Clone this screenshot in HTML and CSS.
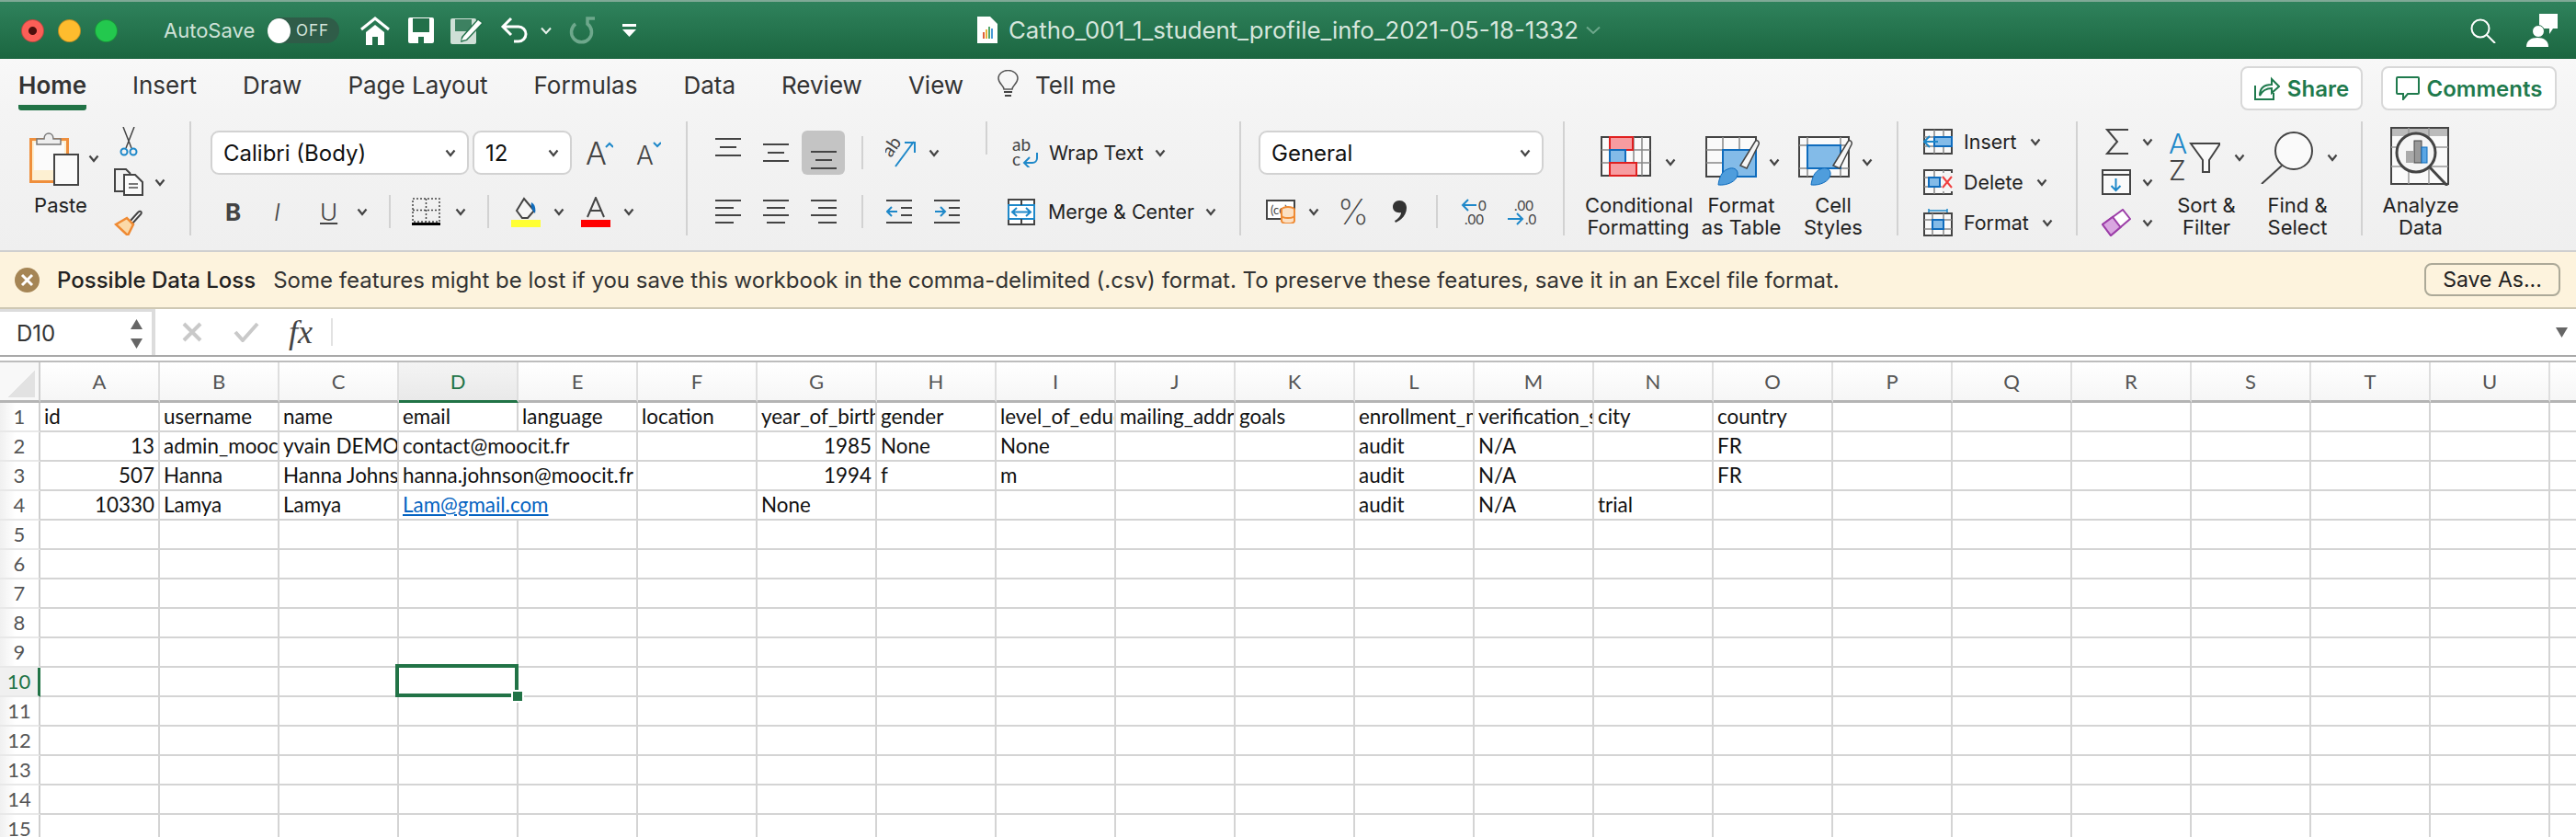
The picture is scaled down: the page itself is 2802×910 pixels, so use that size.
FILE: index.html
```html
<!DOCTYPE html>
<html lang="en">
<head>
  <meta charset="UTF-8">
  <title>Catho_001_1_student_profile_info_2021-05-18-1332</title>
  <link rel="stylesheet" href="styles.css">
</head>
<body>

<svg class="defs">
  <symbol id="chev" viewBox="0 0 12 9"><path d="M1.5 1.5 6 7l4.5-5.5" fill="none" stroke="#444" stroke-width="2.2"/></symbol>
  <symbol id="linesLeft" viewBox="0 0 28 26"><path d="M0 1h28M0 9h20M0 17h28M0 25h20" stroke="#444" stroke-width="2"/></symbol>
  <symbol id="linesCenter" viewBox="0 0 28 26"><path d="M0 1h28M4 9h20M0 17h28M4 25h20" stroke="#444" stroke-width="2"/></symbol>
  <symbol id="linesRight" viewBox="0 0 28 26"><path d="M0 1h28M8 9h20M0 17h28M8 25h20" stroke="#444" stroke-width="2"/></symbol>
</svg>

<header class="titlebar">
  <div class="lights">
    <span class="light red"></span>
    <span class="light amber"></span>
    <span class="light green"></span>
  </div>
  <span class="autosave">AutoSave</span>
  <div class="toggle"><span class="knob"></span><span class="toggle-text">OFF</span></div>
  <div class="qat">
    <svg width="32" height="31" viewBox="0 0 32 31"><path d="M1 14 16 2l15 12" fill="none" stroke="#fff" stroke-width="3"/><path d="M6 17 16 9l10 8v14h-7v-9h-6v9H6z" fill="#fff"/></svg>
    <svg class="ml-20" width="28" height="28" viewBox="0 0 28 28"><rect width="28" height="28" rx="2" fill="#fff"/><rect x="5" y="1" width="18" height="15" fill="#22704a"/><rect x="11" y="21" width="6" height="7" fill="#22704a"/></svg>
    <svg class="ml-18" width="36" height="30" viewBox="0 0 36 30"><rect y="2" width="28" height="28" rx="2" fill="#cfe0d7"/><rect x="5" y="3" width="18" height="13" fill="#3d8161"/><path d="M12 22 30 2l6 5-18 19-7 2z" fill="#22704a"/><path d="M14 22 30 4l4 3-17 18-5 1z" fill="#fff"/></svg>
    <svg class="ml-18" width="30" height="30" viewBox="0 0 30 30"><path d="M12 2 3 11l9 9M3 11h17a7.500 7.500 0 0 1 0 16h-5" fill="none" stroke="#fff" stroke-width="3"/></svg>
    <svg class="ml-14" width="12" height="9" viewBox="0 0 12 9"><path d="M1 1.500 6 7l5-5.500" fill="none" stroke="#e8f1ec" stroke-width="2"/></svg>
    <svg class="ml-17" width="31" height="30" viewBox="0 0 31 30"><path d="M9 8a11 11 0 1 0 13 0V2h8" fill="none" stroke="#6ea88c" stroke-width="3.500"/></svg>
    <svg class="ml-29" width="15" height="14" viewBox="0 0 15 14"><rect width="15" height="3" fill="#fff"/><path d="M0 6h15l-7.500 8z" fill="#fff"/></svg>
  </div>
  <div class="doc-title">
    <svg width="22" height="29" viewBox="0 0 22 29"><path d="M0 0h14l8 8v21H0z" fill="#fff"/><rect x="6" y="17" width="2" height="7" fill="#e0603a"/><rect x="9" y="14" width="2" height="10" fill="#e7b23a"/><rect x="12" y="11" width="2" height="13" fill="#54a86b"/><rect x="15" y="13" width="2" height="11" fill="#4b9bd6"/></svg>
    <span class="doc-name">Catho_001_1_student_profile_info_2021-05-18-1332</span>
    <svg class="doc-chev" width="16" height="10" viewBox="0 0 16 10"><path d="M1 1.500 8 8l7-6.500" fill="none" stroke="#6ea88c" stroke-width="2"/></svg>
  </div>
  <div class="title-right">
    <svg width="28" height="27" viewBox="0 0 28 27"><circle cx="11" cy="11" r="9.500" fill="none" stroke="#fff" stroke-width="2"/><path d="m18 18 9 9" stroke="#fff" stroke-width="2"/></svg>
    <svg class="ml-33" width="34" height="36" viewBox="0 0 34 36"><path d="M14 0h20v16h-5l-4 6v-6H14z" fill="#fff"/><circle cx="13" cy="19" r="6.500" fill="#fff" stroke="#1f6e48" stroke-width="1"/><path d="M0 36c0-7 5-10 12-10s12 3 12 10z" fill="#fff"/></svg>
  </div>
</header>

<nav class="tabs">
  <span class="tab active">Home</span>
  <span class="tab">Insert</span>
  <span class="tab">Draw</span>
  <span class="tab">Page Layout</span>
  <span class="tab">Formulas</span>
  <span class="tab">Data</span>
  <span class="tab">Review</span>
  <span class="tab">View</span>
  <svg class="bulb" width="23" height="30" viewBox="0 0 23 30"><path d="M7 21c0-4-6-6-6-12a10.500 8.500 0 0 1 21 0c0 6-6 8-6 12z" fill="none" stroke="#555" stroke-width="1.500"/><path d="M7 24h9M8 28h7" stroke="#444" stroke-width="2"/></svg>
  <span class="tab tell">Tell me</span>
  <div class="tab-actions">
    <button class="action share">
      <svg width="28" height="26" viewBox="0 0 28 26"><path d="M1 10v15h20v-7M6 21c0-8 5-12 13-12V3l8 8-8 7v-5c-6 0-10 2-13 8z" fill="none" stroke="#1f7a4d" stroke-width="2"/></svg>
      Share
    </button>
    <button class="action comments">
      <svg width="26" height="26" viewBox="0 0 26 26"><path d="M2 1h22a1 1 0 0 1 1 1v16a1 1 0 0 1-1 1H13l-5 6v-6H2a1 1 0 0 1-1-1V2a1 1 0 0 1 1-1z" fill="none" stroke="#1f7a4d" stroke-width="2"/></svg>
      Comments
    </button>
  </div>
</nav>

<section class="ribbon">

  <div class="group clip">
    <div class="paste">
      <div class="paste-top">
        <svg width="54" height="60" viewBox="0 0 54 60"><rect x="1.500" y="9.500" width="40" height="46" fill="#fdf0d2" stroke="#ef8f3c" stroke-width="3"/><rect x="5" y="13" width="33" height="30" fill="#fbfbfb"/><path d="M8 15V9h8c0-8 10-8 10 0h8v6z" fill="#eee" stroke="#777" stroke-width="1.500"/><rect x="27" y="26" width="26" height="33" fill="#fafafa" stroke="#444" stroke-width="2"/></svg>
        <svg class="chev"><use href="#chev"/></svg>
      </div>
      <div class="big-label">Paste</div>
    </div>
    <div class="clip-tools">
      <div class="tool-row">
        <svg class="ml-6" width="20" height="32" viewBox="0 0 20 32"><path d="M4 0 13 23M16 0 7 23" stroke="#444" stroke-width="1.500"/><circle cx="5" cy="27" r="3.500" fill="none" stroke="#1e88c9" stroke-width="2"/><circle cx="15" cy="27" r="3.500" fill="none" stroke="#1e88c9" stroke-width="2"/></svg>
      </div>
      <div class="tool-row">
        <svg width="32" height="30" viewBox="0 0 32 30"><path d="M10 25H1V1h12l5 5" fill="none" stroke="#444" stroke-width="2"/><path d="M11 7h12l8 8v14H11z" fill="#fafafa" stroke="#444" stroke-width="2"/><path d="M16 17h10M16 21h10" stroke="#777" stroke-width="2"/></svg>
        <svg class="chev ml-12"><use href="#chev"/></svg>
      </div>
      <div class="tool-row">
        <svg width="31" height="28" viewBox="0 0 31 28"><path d="m17 13 9-10c3-3 5 0 3 2l-9 10z" fill="#fff" stroke="#444" stroke-width="2"/><path d="M2 16 14 9l7 7-6 12z" fill="#fbd9a8" stroke="#ef8a33" stroke-width="2.500"/></svg>
      </div>
    </div>
  </div>

  <div class="group font">
    <div class="row row-top">
      <div class="combo font-name">Calibri (Body)<svg class="chev"><use href="#chev"/></svg></div>
      <div class="combo font-size">12<svg class="chev"><use href="#chev"/></svg></div>
      <svg class="ml-15" width="30" height="30" viewBox="0 0 30 30"><text class="glyph" x="0" y="28" font-size="34">A</text><path d="m22 9 4-4 4 4" fill="none" stroke="#1e88c9" stroke-width="2"/></svg>
      <svg class="ml-25" width="27" height="30" viewBox="0 0 27 30"><text class="glyph" x="0" y="28" font-size="28">A</text><path d="m19 4 4 4 4-4" fill="none" stroke="#1e88c9" stroke-width="2"/></svg>
    </div>
    <div class="row row-bottom font-bottom">
      <span class="fmt bold">B</span>
      <span class="fmt italic">I</span>
      <span class="fmt under">U</span>
      <svg class="chev ml-22"><use href="#chev"/></svg>
      <span class="sep ml-23"></span>
      <svg class="ml-23" width="31" height="30" viewBox="0 0 31 30"><path d="M1 1h29v25H1zM15.500 1v25M1 13.500h29" fill="none" stroke="#444" stroke-width="1.500" stroke-dasharray="2 2"/><rect y="27" width="31" height="3" fill="#000"/></svg>
      <svg class="chev ml-16"><use href="#chev"/></svg>
      <span class="sep ml-23"></span>
      <svg class="ml-24" width="32" height="33" viewBox="0 0 32 33"><path d="m6 15 8-13 11 13-7 8h-6z" fill="#f5f5f5" stroke="#444" stroke-width="2"/><path d="M22 6c4 2 5 7 4 12-3-3-5-7-4-12z" fill="#0f6cbd"/><rect y="25" width="32" height="8" fill="#ffff33"/></svg>
      <svg class="chev ml-14"><use href="#chev"/></svg>
      <svg class="ml-18" width="32" height="33" viewBox="0 0 32 33"><path d="m7 22 9-21 9 21M10 15h12" fill="none" stroke="#444" stroke-width="2"/><rect y="25" width="32" height="8" fill="#f00"/></svg>
      <svg class="chev ml-14"><use href="#chev"/></svg>
    </div>
  </div>

  <div class="group align">
    <div class="row row-top">
      <svg width="28" height="48" viewBox="0 0 28 48"><path d="M0 9h28M5 18h18M0 27h28" stroke="#444" stroke-width="2"/></svg>
      <svg class="ml-24" width="28" height="48" viewBox="0 0 28 48"><path d="M0 15h28M5 24h18M0 33h28" stroke="#444" stroke-width="2"/></svg>
      <span class="pressed ml-14"><svg width="28" height="48" viewBox="0 0 28 48"><path d="M0 23h28M5 32h18M0 41h28" stroke="#444" stroke-width="2"/></svg></span>
      <span class="sep ml-18"></span>
      <svg class="ml-24" width="33" height="31" viewBox="0 0 33 31"><text class="glyph small-glyph" transform="translate(6 21) rotate(-55)" font-size="20">ab</text><path d="m11 30 20-27M21 4h11v11" fill="none" stroke="#1e88c9" stroke-width="2"/></svg>
      <svg class="chev ml-14"><use href="#chev"/></svg>
      <span class="sep sep-short ml-50"></span>
      <svg class="ml-27" width="29" height="31" viewBox="0 0 29 31"><text class="glyph small-glyph" x="0" y="13" font-size="19">ab</text><text class="glyph small-glyph" x="0" y="29" font-size="19">c</text><path d="M27 15v6a5 5 0 0 1-5 5H13m6-6-6 6 6 6" fill="none" stroke="#1e88c9" stroke-width="2"/></svg>
      <span class="big-label inline ml-11">Wrap Text</span>
      <svg class="chev ml-12"><use href="#chev"/></svg>
    </div>
    <div class="row row-bottom">
      <svg width="28" height="26"><use href="#linesLeft"/></svg>
      <svg class="ml-24" width="28" height="26"><use href="#linesCenter"/></svg>
      <svg class="ml-24" width="28" height="26"><use href="#linesRight"/></svg>
      <span class="sep ml-27"></span>
      <svg class="ml-25" width="28" height="26" viewBox="0 0 28 26"><path d="M0 1h28M16 9h12M16 17h12M0 25h28" stroke="#444" stroke-width="2"/><path d="M12 13H1m5-5-5 5 5 5" fill="none" stroke="#1e88c9" stroke-width="2"/></svg>
      <svg class="ml-24" width="28" height="26" viewBox="0 0 28 26"><path d="M0 1h28M16 9h12M16 17h12M0 25h28" stroke="#444" stroke-width="2"/><path d="M1 13h11M7 8l5 5-5 5" fill="none" stroke="#1e88c9" stroke-width="2"/></svg>
      <svg class="ml-52" width="30" height="29" viewBox="0 0 30 29"><rect x="1" y="1" width="28" height="27" fill="#fff" stroke="#444" stroke-width="2"/><rect x="1" y="7" width="28" height="15" fill="#fff" stroke="#1e88c9" stroke-width="2"/><path d="M15 1v6M15 22v6" stroke="#444" stroke-width="2"/><path d="M6 14.500h18M10 10l-5 4.500 5 4.500M20 10l5 4.500-5 4.500" fill="none" stroke="#1e88c9" stroke-width="2"/></svg>
      <span class="big-label inline ml-14">Merge &amp; Center</span>
      <svg class="chev ml-12"><use href="#chev"/></svg>
    </div>
  </div>

  <div class="group number">
    <div class="row row-top">
      <div class="combo number-format">General<svg class="chev"><use href="#chev"/></svg></div>
    </div>
    <div class="row row-bottom number-bottom">
      <svg width="32" height="26" viewBox="0 0 32 26"><rect x="1" y="1" width="30" height="20" fill="#fff" stroke="#444" stroke-width="2"/><text class="glyph small-glyph" x="5" y="16" font-size="13">(cc)</text><ellipse cx="24" cy="11" rx="7" ry="3" fill="#fbe0c4" stroke="#ef8a33" stroke-width="2"/><path d="M17 11v12c0 4 14 4 14 0V11M17 17c0 4 14 4 14 0" fill="#fbe0c4" stroke="#ef8a33" stroke-width="2"/></svg>
      <svg class="chev ml-14"><use href="#chev"/></svg>
      <span class="percent ml-20">%</span>
      <svg class="ml-29" width="16" height="24" viewBox="0 0 16 24"><path d="M8 0c5 0 8 3 8 8 0 7-5 13-12 16l-1-2c4-2 7-6 7-9-5 1-9-2-9-6 0-4 3-7 7-7z" fill="#333"/></svg>
      <span class="sep ml-32"></span>
      <svg class="ml-24" width="31" height="30" viewBox="0 0 31 30"><text class="glyph small-glyph" x="20" y="14" font-size="15">0</text><text class="glyph small-glyph" x="5" y="29" font-size="15">.00</text><path d="M18 8H3m6-6-6 6 6 6" fill="none" stroke="#1e88c9" stroke-width="2"/></svg>
      <svg class="ml-20" width="32" height="30" viewBox="0 0 32 30"><text class="glyph small-glyph" x="8" y="14" font-size="15">.00</text><text class="glyph small-glyph" x="20" y="29" font-size="15">.0</text><path d="M1 23h16m-6-6 6 6-6 6" fill="none" stroke="#1e88c9" stroke-width="2"/></svg>
    </div>
  </div>

  <div class="group styles">
    <div class="big-tool cond">
      <div class="big-top">
        <svg width="55" height="44" viewBox="0 0 55 44"><rect x="1" y="1" width="53" height="42" fill="#fafafa" stroke="#444" stroke-width="2"/><path d="M36 1v42M45 1v42M1 15h53M1 29h53M10 1v42" stroke="#888" stroke-width="1.500"/><rect x="10" y="1" width="25" height="14" fill="#f79ca0" stroke="#e02020" stroke-width="2"/><rect x="10" y="15" width="17" height="14" fill="#83bbe8" stroke="#0f6cbd" stroke-width="2"/><rect x="10" y="29" width="29" height="14" fill="#f79ca0" stroke="#e02020" stroke-width="2"/></svg>
        <svg class="chev ml-15"><use href="#chev"/></svg>
      </div>
      <div class="big-label">Conditional<br>Formatting</div>
    </div>
    <div class="big-tool table-fmt">
      <div class="big-top">
        <svg width="59" height="54" viewBox="0 0 59 54"><rect x="1" y="1" width="54" height="43" fill="#fafafa" stroke="#444" stroke-width="2"/><path d="M19 1v43M37 1v43M1 15h54M1 29h54" stroke="#888" stroke-width="1.500"/><rect x="19" y="15" width="36" height="29" fill="#83bbe8" stroke="#0f6cbd" stroke-width="2"/><path d="m38 32 16-26c2-3 5 0 4 3L45 35z" fill="#f5f5f5" stroke="#444" stroke-width="1.500"/><path d="M14 53c1-8 4-15 10-17 6-3 12 0 11 6-1 7-11 12-21 11z" fill="#4f9ddc" stroke="#0f6cbd" stroke-width="1"/></svg>
        <svg class="chev ml-10"><use href="#chev"/></svg>
      </div>
      <div class="big-label">Format<br>as Table</div>
    </div>
    <div class="big-tool cell-style">
      <div class="big-top">
        <svg width="59" height="54" viewBox="0 0 59 54"><rect x="1" y="1" width="54" height="43" fill="#fafafa" stroke="#444" stroke-width="2"/><path d="M10 1v43M1 10h54M1 35h54M46 1v43" stroke="#888" stroke-width="1.500"/><rect x="10" y="10" width="36" height="25" fill="#83bbe8" stroke="#0f6cbd" stroke-width="2"/><path d="m38 32 16-26c2-3 5 0 4 3L45 35z" fill="#f5f5f5" stroke="#444" stroke-width="1.500"/><path d="M14 53c1-8 4-15 10-17 6-3 12 0 11 6-1 7-11 12-21 11z" fill="#4f9ddc" stroke="#0f6cbd" stroke-width="1"/></svg>
        <svg class="chev ml-10"><use href="#chev"/></svg>
      </div>
      <div class="big-label">Cell<br>Styles</div>
    </div>
  </div>

  <div class="group cells">
    <div class="tool-row">
      <svg width="32" height="28" viewBox="0 0 32 28"><rect x="1" y="1" width="30" height="26" fill="#fafafa" stroke="#444" stroke-width="2"/><path d="M12 1v26M1 9h30M1 19h30M22 1v26" stroke="#888" stroke-width="1.500"/><rect x="12" y="9" width="19" height="10" fill="#83bbe8" stroke="#0f6cbd" stroke-width="2"/><path d="M16 14H1m6-6-6 6 6 6" fill="none" stroke="#1e88c9" stroke-width="2"/></svg>
      <span class="big-label inline ml-12">Insert</span>
      <svg class="chev ml-14"><use href="#chev"/></svg>
    </div>
    <div class="tool-row">
      <svg width="32" height="28" viewBox="0 0 32 28"><rect x="1" y="1" width="30" height="26" fill="#fafafa" stroke="#444" stroke-width="2"/><path d="M12 1v26M1 9h30M1 19h30M22 1v26" stroke="#888" stroke-width="1.500"/><rect x="6" y="9" width="12" height="10" fill="#83bbe8" stroke="#0f6cbd" stroke-width="2"/><rect x="20" y="4" width="12" height="20" fill="#f4f4f4"/><path d="m21 8 10 12M31 8 21 20" stroke="#f04040" stroke-width="2"/></svg>
      <span class="big-label inline ml-12">Delete</span>
      <svg class="chev ml-14"><use href="#chev"/></svg>
    </div>
    <div class="tool-row">
      <svg width="32" height="30" viewBox="0 0 32 30"><rect x="1" y="5" width="30" height="24" fill="#fafafa" stroke="#444" stroke-width="2"/><path d="M10 5v24M22 5v24M1 12h30M1 22h30" stroke="#888" stroke-width="1.500"/><rect x="10" y="12" width="12" height="10" fill="#83bbe8" stroke="#0f6cbd" stroke-width="2"/><path d="M6 2h20M6 0v4M26 0v4" stroke="#1e88c9" stroke-width="1.500"/></svg>
      <span class="big-label inline ml-12">Format</span>
      <svg class="chev ml-14"><use href="#chev"/></svg>
    </div>
  </div>

  <div class="group editing">
    <div class="edit-tools">
      <div class="tool-row">
        <span class="edit-icon"><svg width="25" height="28" viewBox="0 0 25 28"><path d="M25 1H2l11 13L2 27h23" fill="none" stroke="#444" stroke-width="2"/></svg></span>
        <svg class="chev ml-12"><use href="#chev"/></svg>
      </div>
      <div class="tool-row">
        <span class="edit-icon"><svg width="32" height="28" viewBox="0 0 32 28"><rect x="1" y="1" width="30" height="26" fill="#fafafa" stroke="#444" stroke-width="2"/><path d="M1 6h30" stroke="#444" stroke-width="2"/><path d="M15.500 10v13m-5-5 5 5 5-5" fill="none" stroke="#1e88c9" stroke-width="2"/></svg></span>
        <svg class="chev ml-12"><use href="#chev"/></svg>
      </div>
      <div class="tool-row">
        <span class="edit-icon"><svg width="32" height="30" viewBox="0 0 32 30"><path d="M1 17 23 1l8 10-21 18z" fill="#fff" stroke="#9c3ea8" stroke-width="2"/><path d="M1 17 12 9l8.500 11L10 29z" fill="#d9a6e0" stroke="#9c3ea8" stroke-width="2"/></svg></span>
        <svg class="chev ml-12"><use href="#chev"/></svg>
      </div>
    </div>
    <div class="big-tool sort">
      <div class="big-top">
        <svg width="56" height="54" viewBox="0 0 56 54"><text class="glyph" x="0" y="24" font-size="30" fill="#1e88c9">A</text><text class="glyph" x="0" y="53" font-size="30">Z</text><path d="M24 13h32L44 31v13h-7V31z" fill="#fafafa" stroke="#444" stroke-width="2"/></svg>
        <svg class="chev ml-15"><use href="#chev"/></svg>
      </div>
      <div class="big-label">Sort &amp;<br>Filter</div>
    </div>
    <div class="big-tool find">
      <div class="big-top">
        <svg width="57" height="57" viewBox="0 0 57 57"><ellipse cx="36" cy="21" rx="20" ry="20" fill="#fafafa" stroke="#444" stroke-width="2"/><path d="M23 37 1 57" stroke="#444" stroke-width="2"/></svg>
        <svg class="chev ml-15"><use href="#chev"/></svg>
      </div>
      <div class="big-label">Find &amp;<br>Select</div>
    </div>
  </div>

  <div class="group analyze">
    <div class="big-tool analyze-tool">
      <div class="big-top">
        <svg width="64" height="64" viewBox="0 0 64 64"><rect x="1" y="1" width="62" height="61" fill="#fafafa" stroke="#444" stroke-width="2"/><rect x="2" y="2" width="60" height="8" fill="#bbb"/><path d="M1 22h62M1 43h62M20 1v61M42 1v61" stroke="#999" stroke-width="1.500"/><circle cx="28" cy="28" r="21" fill="#f5f5f5" stroke="#444" stroke-width="3"/><path d="m43 44 19 20" stroke="#444" stroke-width="3"/><rect x="17" y="26" width="8" height="13" fill="#aaa"/><rect x="26" y="15" width="8" height="24" fill="#999" stroke="#444"/><rect x="34" y="22" width="6" height="17" fill="#5aa6e4" stroke="#0f6cbd"/></svg>
      </div>
      <div class="big-label">Analyze<br>Data</div>
    </div>
  </div>
</section>

<section class="banner">
  <svg width="27" height="27" viewBox="0 0 27 27"><circle cx="13.500" cy="13.500" r="13.500" fill="#a58555"/><path d="m8 8 11 11M19 8 8 19" stroke="#fff" stroke-width="3"/></svg>
  <strong class="banner-title">Possible Data Loss</strong>
  <span class="banner-text">Some features might be lost if you save this workbook in the comma-delimited (.csv) format. To preserve these features, save it in an Excel file format.</span>
  <button class="save-as">Save As...</button>
</section>

<section class="formula-bar">
  <div class="name-box">
    <span>D10</span>
    <div class="spin">
      <svg width="13" height="11" viewBox="0 0 13 11"><path d="M6.500 0 13 11H0z" fill="#666"/></svg>
      <svg width="13" height="11" viewBox="0 0 13 11"><path d="M6.500 11 13 0H0z" fill="#666"/></svg>
    </div>
  </div>
  <svg class="ml-29" width="22" height="22" viewBox="0 0 22 22"><path d="m2 2 18 18M20 2 2 20" stroke="#c9c9c9" stroke-width="4"/></svg>
  <svg class="ml-34" width="28" height="22" viewBox="0 0 28 22"><path d="m2 11 8 9L26 2" fill="none" stroke="#c9c9c9" stroke-width="4"/></svg>
  <span class="fx">fx</span>
  <span class="fx-sep"></span>
  <svg class="formula-drop" width="13" height="11" viewBox="0 0 13 11"><path d="M6.500 11 13 0H0z" fill="#666"/></svg>
</section>

<main class="sheet" id="sheet"></main>

<script src="app.js"></script>
</body>
</html>
```

FILE: styles.css
```css
html, body {
  margin: 0;
  height: 910px;
  overflow: hidden;
}
body {
  width: 2802px;
  font-family: Inter, "Noto Sans", sans-serif;
  color: #222;
  background: #fff;
}
.defs {
  position: absolute;
  width: 0;
  height: 0;
}
svg {
  flex: none;
  display: block;
}
.glyph {
  font-family: Inter, sans-serif;
  font-weight: 300;
  fill: #444;
}
.glyph[fill="#1e88c9"] {
  fill: #1e88c9;
}
.small-glyph {
  font-family: Lato, sans-serif;
  font-weight: 400;
}
.chev {
  width: 12px;
  height: 9px;
}

.ml-6 { margin-left: 6px; }
.ml-10 { margin-left: 10px; }
.ml-11 { margin-left: 11px; }
.ml-12 { margin-left: 12px; }
.ml-14 { margin-left: 14px; }
.ml-15 { margin-left: 15px; }
.ml-16 { margin-left: 16px; }
.ml-17 { margin-left: 17px; }
.ml-18 { margin-left: 18px; }
.ml-20 { margin-left: 20px; }
.ml-22 { margin-left: 22px; }
.ml-23 { margin-left: 23px; }
.ml-24 { margin-left: 24px; }
.ml-25 { margin-left: 25px; }
.ml-27 { margin-left: 27px; }
.ml-29 { margin-left: 29px; }
.ml-32 { margin-left: 32px; }
.ml-33 { margin-left: 33px; }
.ml-34 { margin-left: 34px; }
.ml-50 { margin-left: 50px; }
.ml-52 { margin-left: 52px; }

/* title bar */
.titlebar {
  height: 64px;
  box-sizing: border-box;
  border-top: 2px solid #7fa996;
  display: flex;
  align-items: center;
  position: relative;
  background: linear-gradient(#2f825c, #1b6640);
}
.lights {
  display: flex;
  gap: 15px;
  padding-left: 23px;
}
.light {
  width: 25px;
  height: 25px;
  border-radius: 50%;
  box-sizing: border-box;
  border: 1px solid rgba(0, 0, 0, .25);
}
.red {
  background: radial-gradient(circle, #4d0f0c 0 4px, #fc5f57 5px);
}
.amber {
  background: #febc2e;
}
.green {
  background: #23c84e;
}
.autosave {
  margin-left: 50px;
  width: 113px;
  font-size: 22px;
  color: #cfe2d8;
}
.toggle {
  width: 78px;
  height: 28px;
  border-radius: 14px;
  background: #2f5c48;
  display: flex;
  align-items: center;
}
.knob {
  width: 25px;
  height: 27px;
  border-radius: 50%;
  background: #fff;
}
.toggle-text {
  margin-left: 6px;
  font-size: 17px;
  letter-spacing: 1px;
  color: #d5e5dc;
}
.qat {
  display: flex;
  align-items: center;
  margin-left: 23px;
}
.doc-title {
  position: absolute;
  left: 1063px;
  top: 15px;
  display: flex;
  align-items: center;
  gap: 12px;
}
.doc-name {
  font-size: 25.8px;
  color: #d6e6dd;
  white-space: nowrap;
}
.doc-chev {
  margin-left: -4px;
}
.title-right {
  margin-left: auto;
  padding-right: 20px;
  display: flex;
  align-items: center;
}

/* tabs */
.tabs {
  height: 56px;
  box-sizing: border-box;
  padding-left: 20px;
  display: flex;
  gap: 50px;
  background: linear-gradient(#f8f8f8, #f4f4f4);
}
.tab {
  height: 56px;
  box-sizing: border-box;
  padding-top: 13px;
  font-size: 26px;
  line-height: 32px;
  color: #333;
  white-space: nowrap;
}
.tab.active {
  font-weight: 600;
  border-bottom: 6px solid #217346;
  border-radius: 0 0 3px 3px;
}
.bulb {
  margin: 12px 0 0 -13px;
}
.tell {
  margin-left: -32px;
}
.tab-actions {
  margin-left: auto;
  padding: 8px 21px 0 0;
  display: flex;
  gap: 20px;
  height: 48px;
}
.action {
  height: 48px;
  box-sizing: border-box;
  background: #fff;
  border: 2px solid #d8d8d8;
  border-radius: 8px;
  display: flex;
  align-items: center;
  justify-content: center;
  gap: 8px;
  font: 600 24px Inter, sans-serif;
  color: #1f7a4d;
}
.share {
  width: 133px;
}
.comments {
  width: 191px;
}

/* ribbon */
.ribbon {
  height: 154px;
  box-sizing: border-box;
  padding-top: 12px;
  border-bottom: 2px solid #cfcfcf;
  display: flex;
  background: linear-gradient(#f4f4f4, #efefef);
}
.group {
  height: 124px;
  box-sizing: border-box;
  border-right: 2px solid #d2d2d2;
}
.clip {
  width: 208px;
  display: flex;
}
.font {
  width: 540px;
  padding: 10px 0 0 21px;
}
.align {
  width: 602px;
  padding: 10px 0 0 30px;
}
.number {
  width: 352px;
  padding: 10px 0 0 19px;
}
.styles {
  width: 363px;
  padding-left: 22px;
  display: flex;
  gap: 8px;
}
.cells {
  width: 195px;
  padding-left: 27px;
}
.editing {
  width: 310px;
  padding-left: 26px;
  display: flex;
}
.analyze {
  padding-left: 13px;
  border-right: none;
}
.row {
  height: 48px;
  display: flex;
  align-items: center;
}
.row-bottom {
  margin-top: 16px;
}
.font-bottom {
  padding-left: 16px;
}
.number-bottom {
  padding-left: 8px;
}
.sep {
  flex: none;
  width: 2px;
  height: 36px;
  background: #d2d2d2;
}
.sep-short {
  align-self: flex-start;
  margin-top: -10px;
}
.paste {
  margin-left: 16px;
  width: 100px;
  padding-top: 10px;
}
.paste-top {
  padding-left: 16px;
  display: flex;
  align-items: center;
  gap: 10px;
}
.big-label {
  font-size: 22px;
  line-height: 24px;
  text-align: center;
  color: #222;
  white-space: nowrap;
}
.big-label.inline {
  font-size: 21.4px;
}
.paste .big-label {
  margin-top: 9px;
}
.clip-tools {
  margin-left: 8px;
}
.tool-row {
  height: 44px;
  display: flex;
  align-items: center;
}
.combo {
  height: 48px;
  box-sizing: border-box;
  padding: 0 12px;
  background: #fff;
  border: 2px solid #d2d2d2;
  border-radius: 9px;
  display: flex;
  align-items: center;
  justify-content: space-between;
  font-size: 24px;
  color: #111;
}
.font-name {
  width: 281px;
}
.font-size {
  width: 108px;
  margin-left: 4px;
}
.number-format {
  width: 310px;
}
.fmt {
  font-size: 26px;
  color: #444;
  width: 18px;
}
.bold {
  font-weight: 700;
}
.italic {
  margin-left: 35px;
  font-weight: 300;
  font-style: italic;
}
.under {
  margin-left: 32px;
  font-weight: 300;
  text-decoration: underline;
}
.pressed {
  width: 47px;
  height: 48px;
  background: #c4c4c4;
  border-radius: 6px;
  display: flex;
  justify-content: center;
}
.percent {
  width: 30px;
  font-size: 38px;
  font-weight: 200;
  color: #444;
}
.big-tool {
  padding-top: 10px;
}
.big-top {
  height: 69px;
  display: flex;
  align-items: flex-start;
}
.big-top .chev {
  margin-top: 24px;
}
.cond {
  width: 116px;
}
.cond .big-top {
  padding: 6px 0 0 17px;
  height: 63px;
}
.table-fmt {
  width: 92px;
}
.table-fmt .big-top {
  padding: 6px 0 0 7px;
  height: 63px;
}
.cell-style {
  width: 92px;
}
.cell-style .big-top {
  padding: 6px 0 0 8px;
  height: 63px;
}
.edit-icon {
  width: 32px;
  display: flex;
  justify-content: center;
}
.edit-tools {
  width: 56px;
}
.sort {
  margin-left: 13px;
  width: 90px;
}
.sort .big-top {
  padding: 1px 0 0 4px;
  height: 68px;
}
.find {
  margin-left: 8px;
  width: 92px;
}
.find .big-top {
  padding: 1px 0 0 6px;
  height: 68px;
}
.analyze-tool {
  width: 100px;
  padding-top: 6px;
}
.analyze-tool .big-top {
  padding-left: 17px;
  height: 73px;
}

/* banner */
.banner {
  height: 62px;
  box-sizing: border-box;
  padding: 0 17px 0 16px;
  border-bottom: 2px solid #cfc8b4;
  display: flex;
  align-items: center;
  background: #fdf3dd;
  font-size: 24px;
  color: #333;
}
.banner-title {
  margin-left: 19px;
  font-weight: 500;
  color: #222;
}
.banner-text {
  margin-left: 19px;
  white-space: nowrap;
}
.save-as {
  margin-left: auto;
  width: 148px;
  height: 36px;
  background: #fdf3dd;
  border: 2px solid #aca998;
  border-radius: 8px;
  font: 23px Inter, sans-serif;
  color: #222;
}

/* formula bar */
.formula-bar {
  height: 52px;
  box-sizing: border-box;
  border-bottom: 2px solid #a9a9a9;
  display: flex;
  align-items: center;
  background: #fff;
}
.name-box {
  width: 169px;
  height: 50px;
  box-sizing: border-box;
  padding: 0 10px 0 18px;
  border-right: 4px solid #dcdcdc;
  border-top: 3px solid #dcdcdc;
  display: flex;
  align-items: center;
  justify-content: space-between;
  font-size: 24px;
  color: #333;
}
.spin {
  display: flex;
  flex-direction: column;
  gap: 10px;
}
.fx {
  margin-left: 32px;
  width: 30px;
  font: italic 36px "Liberation Serif", serif;
  color: #444;
}
.fx-sep {
  margin-left: 16px;
  width: 2px;
  height: 30px;
  background: #e2e2e2;
}
.formula-drop {
  margin-left: auto;
  margin-right: 9px;
}

/* sheet */
.sheet {
  margin-top: 4px;
  border-top: 2px solid #bdbdbd;
  display: grid;
  grid-template-columns: 44px repeat(22, 130px);
  grid-template-rows: 44px;
  grid-auto-rows: 32px;
  font-family: Lato, "Liberation Sans", sans-serif;
}
.corner {
  background: #f8f8f8;
  border-right: 2px solid #cfcfcf;
  border-bottom: 3px solid #b4b4b4;
  display: flex;
  padding: 9px 0 0 9px;
  box-sizing: border-box;
}
.corner::before {
  content: "";
  width: 29px;
  height: 29px;
  background: linear-gradient(135deg, transparent 50%, #e2e2e2 50%);
}
.col-head {
  box-sizing: border-box;
  background: linear-gradient(#fff, #f6f6f6);
  border-right: 2px solid #dedede;
  border-bottom: 3px solid #b4b4b4;
  display: flex;
  align-items: center;
  justify-content: center;
  font-size: 22px;
  color: #555;
}
.col-head.on {
  background: linear-gradient(#f4f4f4, #e9e9e9);
  border-bottom-color: #217346;
  color: #217346;
}
.row-head {
  box-sizing: border-box;
  background: linear-gradient(90deg, #f0f0f0, #fff 40%);
  border-right: 2px solid #cfcfcf;
  border-bottom: 2px solid #e8e8e8;
  text-align: center;
  font-size: 22px;
  line-height: 30px;
  color: #555;
}
.row-head.on {
  background: #f0f0f0;
  border-right: 3px solid #217346;
  color: #217346;
}
.cell {
  box-sizing: border-box;
  min-width: 0;
  padding: 0 4px;
  border-right: 2px solid #d4d4d4;
  border-bottom: 2px solid #d4d4d4;
  font-size: 22.4px;
  line-height: 30px;
  color: #111;
  white-space: nowrap;
  overflow: hidden;
}
.cell.num {
  text-align: right;
}
.cell.wide {
  grid-column: span 2;
}
.cell.link {
  color: #0563c1;
  text-decoration: underline;
}
.cell.sel {
  position: relative;
  overflow: visible;
}
.cell.sel::before {
  content: "";
  position: absolute;
  left: -4px;
  right: -2px;
  top: -4px;
  bottom: -2px;
  border: 4px solid #217346;
}
.cell.sel::after {
  content: "";
  position: absolute;
  right: -6px;
  bottom: -6px;
  width: 10px;
  height: 10px;
  background: #217346;
  outline: 2px solid #fff;
}
```

FILE: app.js
```js
const colNames = "ABCDEFGHIJKLMNOPQRSTUV".split("");

// row number -> column letter -> value (numbers align right)
const data = {
  1: { A: "id", B: "username", C: "name", D: "email", E: "language", F: "location", G: "year_of_birth", H: "gender", I: "level_of_education", J: "mailing_address", K: "goals", L: "enrollment_mode", M: "verification_status", N: "city", O: "country" },
  2: { A: 13, B: "admin_moocit", C: "yvain DEMOL", D: "contact@moocit.fr", G: 1985, H: "None", I: "None", L: "audit", M: "N/A", O: "FR" },
  3: { A: 507, B: "Hanna", C: "Hanna Johnson", D: "hanna.johnson@moocit.fr", G: 1994, H: "f", I: "m", L: "audit", M: "N/A", O: "FR" },
  4: { A: 10330, B: "Lamya", C: "Lamya", D: "Lam@gmail.com", G: "None", L: "audit", M: "N/A", N: "trial" }
};

function buildSheet() {
  let html = '<div class="corner"></div>';
  colNames.forEach(c => {
    html += `<div class="col-head${c === "D" ? " on" : ""}">${c}</div>`;
  });

  for (let r = 1; r <= 15; r++) {
    const values = data[r] || {};
    html += `<div class="row-head${r === 10 ? " on" : ""}">${r}</div>`;
    for (let i = 0; i < colNames.length; i++) {
      const c = colNames[i];
      const v = values[c] ?? "";
      let cls = "cell";
      if (typeof v === "number") cls += " num";
      if (c === "D" && r >= 2 && r <= 4) {
        cls += " wide";
        i++; // the address runs over the empty column E
      }
      if (c === "D" && r === 4) cls += " link";
      if (c === "D" && r === 10) cls += " sel";
      html += `<div class="${cls}">${v}</div>`;
    }
  }
  document.getElementById("sheet").innerHTML = html;
}

buildSheet();
```
